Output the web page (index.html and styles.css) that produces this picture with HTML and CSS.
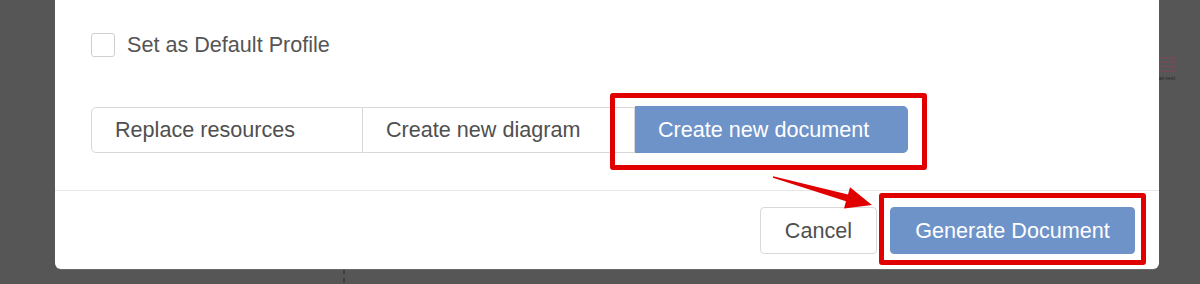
FILE: index.html
```html
<!DOCTYPE html>
<html lang="en">
<head>
    <meta charset="UTF-8">
    <meta name="viewport" content="width=device-width, initial-scale=1.0">
    <title>Generate Document</title>
    <link rel="stylesheet" href="styles.css">
</head>
<body>
    <div class="backdrop-item">
        <svg width="18" height="18" viewBox="0 0 18 18">
            <rect x="1" y="1" width="15" height="13" fill="none" stroke="#7a4a55" stroke-width="1.2"/>
            <line x1="1" y1="5.5" x2="16" y2="5.5" stroke="#7a4a55" stroke-width="1"/>
            <line x1="1" y1="9.5" x2="16" y2="9.5" stroke="#7a4a55" stroke-width="1"/>
        </svg>
        <span>al-test</span>
    </div>

    <div class="modal">
        <div class="modal-body">
            <label class="check-row">
                <span class="checkbox"></span>
                <span>Set as Default Profile</span>
            </label>

            <div class="segmented">
                <div class="segment">Replace resources</div>
                <div class="segment">Create new diagram</div>
                <div class="segment active">Create new document</div>
            </div>
        </div>

        <div class="modal-footer">
            <button class="btn">Cancel</button>
            <button class="btn btn-primary">Generate Document</button>
        </div>

        <!-- annotation overlay -->
        <div class="mark mark-option"></div>
        <div class="mark mark-generate"></div>
        <svg class="arrow" width="115" height="50" viewBox="0 0 115 50">
            <polygon points="8.1,8.3 83,26.5 85,19.3 107,37 79,40.5 81,33.3 7.9,9.7" fill="#e10000"/>
        </svg>
    </div>

    <div class="backdrop-line"></div>
</body>
</html>
```

FILE: styles.css
```css
body {
    margin: 0;
    background-color: #565656;
    font-family: "Liberation Sans", Arial, sans-serif;
    position: relative;
    height: 284px;
    overflow: hidden;
}
.modal {
    position: relative;
    margin-left: 55px;
    width: 1104px;
    background-color: #fff;
    border-radius: 0 0 6px 6px;
    box-shadow: 0 1px 0 #6a6a6a;
}
.modal-body {
    padding: 33px 36px 37px;
    border-bottom: 1px solid #e6e6e6;
}
.check-row {
    display: flex;
    align-items: center;
    gap: 12px;
    height: 24px;
    color: #555;
    font-size: 21.6px;
}
.checkbox {
    width: 22px;
    height: 22px;
    border: 1px solid #cfcfcf;
    border-radius: 3px;
    background: #fff;
}
.segmented {
    display: flex;
    margin-top: 50px;
    height: 46px;
}
.segment {
    box-sizing: border-box;
    width: 272px;
    display: flex;
    align-items: center;
    padding: 0 23px;
    font-size: 21.6px;
    color: #4f4f4f;
    border: 1px solid #d8d8d8;
    border-left: none;
}
.segment:first-child {
    border-left: 1px solid #d8d8d8;
    border-radius: 5px 0 0 5px;
}
.segment.active {
    background-color: #6e93c9;
    border-color: #6e93c9;
    color: #fff;
    border-radius: 0 5px 5px 0;
    width: 273px;
    margin-top: -1px;
    height: 47px;
}
.modal-footer {
    display: flex;
    justify-content: flex-end;
    gap: 13px;
    padding: 16px 24px 15px;
}
.btn {
    height: 47px;
    padding: 0 24px;
    font-family: inherit;
    font-size: 21.6px;
    color: #4f4f4f;
    background: #fff;
    border: 1px solid #d9d9d9;
    border-radius: 4px;
}
.btn-primary {
    width: 245px;
    background-color: #6e93c9;
    border-color: #6e93c9;
    color: #fff;
}
.mark {
    position: absolute;
    box-sizing: border-box;
    border: 5px solid #e10000;
    border-radius: 3px;
}
.mark-option {
    left: 555px;
    top: 93px;
    width: 317px;
    height: 77px;
}
.mark-generate {
    left: 824px;
    top: 193px;
    width: 267px;
    height: 72px;
}
.arrow {
    position: absolute;
    left: 710px;
    top: 168px;
}
.backdrop-item {
    position: absolute;
    left: 1158px;
    top: 57px;
    display: flex;
    flex-direction: column;
    align-items: center;
    font-size: 6px;
    color: #2a2a2a;
}
.backdrop-line {
    margin-left: 343px;
    height: 14px;
    border-left: 2px dashed #3f3f3f;
}
```
